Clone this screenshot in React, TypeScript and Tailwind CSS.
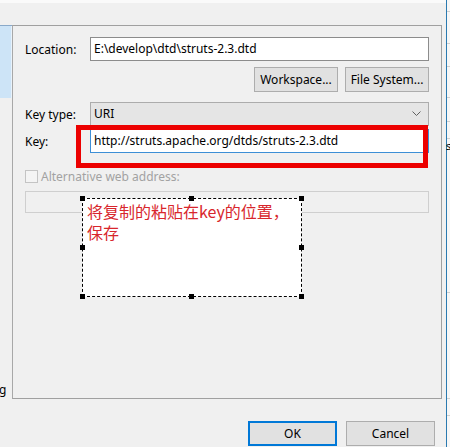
import React from "react";

const font = { fontFamily: '"Segoe UI", "Noto Sans", "Noto Sans CJK SC", sans-serif' };

function Handle({ className }: { className: string }) {
  return <div className={`absolute w-[5px] h-[5px] bg-black ${className}`} />;
}

export default function App() {
  return (
    <div
      className="relative w-[450px] h-[447px] bg-[#f0f0f0] overflow-hidden text-[12px] text-black"
      style={font}
    >
      <div className="flex h-full">
        {/* main dialog area */}
        <div className="flex flex-col w-[446px] h-full">
          <div className="h-[25px] shrink-0 border-t-[3px] border-[#fafafa]" />
          <div className="flex h-[374px] shrink-0">
            {/* left column */}
            <div className="w-[12px] shrink-0 flex flex-col border-t border-[#8aa9c9]">
              <div className="h-[72px] bg-[#cde4f7] border-r border-[#e8f2fb]" />
              <div className="flex-1 flex flex-col justify-end pb-[2px]">
                <span className="leading-[14px] text-[12px] -ml-[1px]">g</span>
              </div>
            </div>
            {/* panel */}
            <div className="w-[430px] shrink-0 border border-[#a0a0a0] border-l-[#a8a8a8] px-[12px] pt-[11px] flex flex-col">
              <div className="flex items-center h-[24px]">
                <div className="w-[65px] shrink-0 pt-[1px]">Location:</div>
                <div className="flex-1 h-[24px] bg-white border border-[#8c8c8c] flex items-center px-[3px]">
                  E:\develop\dtd\struts-2.3.dtd
                </div>
              </div>
              <div className="flex justify-end gap-[7px] mt-[6px]">
                <div className="w-[84px] h-[25px] bg-[#e1e1e1] border border-[#adadad] flex items-center justify-center">
                  Workspace...
                </div>
                <div className="w-[84px] h-[25px] bg-[#e1e1e1] border border-[#adadad] flex items-center justify-center">
                  File System...
                </div>
              </div>
              <div className="flex items-center h-[24px] mt-[10px]">
                <div className="w-[65px] shrink-0 pt-[1px]">Key type:</div>
                <div className="flex-1 h-[24px] bg-[#e5e5e5] border border-[#acacac] flex items-center justify-between px-[3px]">
                  <span>URI</span>
                  <svg width="9" height="6" viewBox="0 0 9 6" className="mr-[4px]">
                    <path d="M0.5 0.5 L4.5 4.5 L8.5 0.5" fill="none" stroke="#606060" strokeWidth="1" />
                  </svg>
                </div>
              </div>
              <div className="flex items-center h-[24px] mt-[3px]">
                <div className="w-[65px] shrink-0 pt-[2px]">Key:</div>
                <div className="flex-1 h-[24px] bg-white border border-[#3d8fd6] flex items-center px-[3px]">
                  http://struts.apache.org/dtds/struts-2.3.dtd
                </div>
              </div>
              <div className="flex items-center mt-[17px] h-[13px]">
                <div className="w-[13px] h-[13px] border border-[#c4c4c4] bg-[#f4f4f4]" />
                <span className="ml-[3px] text-[#a2a2a2]">Alternative web address:</span>
              </div>
              <div className="h-[22px] mt-[8px] border border-[#cfcfcf] bg-[#f0f0f0]" />
            </div>
            {/* right gap */}
            <div className="flex-1" />
          </div>
          <div className="flex-1 flex justify-end items-start pt-[22px] pr-[11px] gap-[9px]">
            <div className="w-[89px] h-[25px] bg-[#e1e1e1] border-2 border-[#0078d7] flex items-center justify-center">
              OK
            </div>
            <div className="w-[89px] h-[25px] bg-[#e1e1e1] border border-[#adadad] flex items-center justify-center">
              Cancel
            </div>
          </div>
        </div>
        {/* right neighbouring window strip */}
        <div className="w-[4px] h-full border-l border-[#2a7ab0] bg-[#f7f7f7] flex flex-col">
          <div className="h-[12px] border-b border-[#d0d0d0]" />
          <div className="h-[32px] border-b border-[#d0d0d0]" />
          <div className="h-[23px] border-b border-[#d0d0d0]" />
          <div className="h-[31px] border-b border-[#d0d0d0]" />
          <div className="h-[24px] border-b border-[#d0d0d0]" />
          <div className="h-[17px] border-b border-[#d0d0d0]" />
          <div className="h-[14px] text-[11px] leading-[14px] -ml-[1px]">s</div>
          <div className="h-[140px] border-b border-[#d0d0d0]" />
          <div className="h-[106px] border-b border-[#d0d0d0]" />
          <div className="h-[17px] border-b border-[#d0d0d0]" />
        </div>
      </div>

      {/* red highlight box */}
      <div className="absolute left-[76px] top-[125px] w-[352px] h-[43px] border-[5px] border-[#ec0000]" />

      {/* annotation box */}
      <div className="absolute left-[82px] top-[198px] w-[220px] h-[99px] bg-white border border-dashed border-black">
        <div
          className="pl-[4px] pt-[2px] pr-[2px] text-[16px] leading-[21px] text-[#d8262c] whitespace-nowrap"
          style={{ fontFamily: '"Noto Sans CJK SC", "Noto Sans", sans-serif' }}
        >
          将复制的粘贴在key的位置，
          <br />
          保存
        </div>
        <Handle className="-left-[3px] -top-[3px]" />
        <Handle className="left-[106px] -top-[3px]" />
        <Handle className="-right-[3px] -top-[3px]" />
        <Handle className="-left-[3px] top-[46px]" />
        <Handle className="-right-[3px] top-[46px]" />
        <Handle className="-left-[3px] -bottom-[3px]" />
        <Handle className="left-[106px] -bottom-[3px]" />
        <Handle className="-right-[3px] -bottom-[3px]" />
      </div>
    </div>
  );
}
